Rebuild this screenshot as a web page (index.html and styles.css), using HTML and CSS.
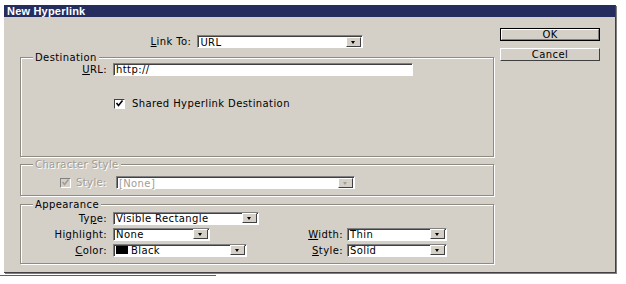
FILE: index.html
```html
<!DOCTYPE html>
<html lang="en">
<head>
    <meta charset="UTF-8">
    <title>New Hyperlink</title>
    <link rel="stylesheet" href="styles.css">
</head>
<body>

<div class="dialog">
    <div class="titlebar">New Hyperlink</div>

    <div class="content">
        <div class="main">
            <div class="link-row">
                <span class="label-inline"><u>L</u>ink To:</span>
                <div class="select w-link"><span class="value">URL</span><span class="drop"></span></div>
            </div>

            <!-- Destination -->
            <div class="group dest">
                <div class="legend">Destination</div>
                <div class="row url-row">
                    <span class="lbl"><u>U</u>RL:</span>
                    <div class="textbox">http://</div>
                </div>
                <div class="row check-row">
                    <span class="check"><svg viewBox="0 0 9 9" width="9" height="9"><polyline points="1.5,4 3.5,6.5 7.5,1.5" fill="none" stroke="#000" stroke-width="1.6"/></svg></span>
                    <span>Shared Hyperlink Destination</span>
                </div>
            </div>

            <!-- Character Style -->
            <div class="group charstyle disabled">
                <div class="legend">Character Style</div>
                <div class="row style-row">
                    <span class="check"><svg viewBox="0 0 9 9" width="9" height="9"><polyline points="1.5,4 3.5,6.5 7.5,1.5" fill="none" stroke="#a19d95" stroke-width="1.6"/></svg></span>
                    <span class="style-lbl">Style:</span>
                    <div class="select w-none"><span class="value">[None]</span><span class="drop"></span></div>
                </div>
            </div>

            <!-- Appearance -->
            <div class="group appearance">
                <div class="legend">Appearance</div>
                <div class="app-grid">
                    <span class="lbl">Ty<u>p</u>e:</span>
                    <div class="cell"><div class="select w-type"><span class="value">Visible Rectangle</span><span class="drop"></span></div></div>
                    <span></span>
                    <span></span>

                    <span class="lbl">Hi<u>g</u>hlight:</span>
                    <div class="cell"><div class="select w-high"><span class="value">None</span><span class="drop"></span></div></div>
                    <span class="lbl lbl-right"><u>W</u>idth:</span>
                    <div class="cell"><div class="select w-side"><span class="value">Thin</span><span class="drop"></span></div></div>

                    <span class="lbl"><u>C</u>olor:</span>
                    <div class="cell"><div class="select w-color"><span class="swatch"></span><span class="value">Black</span><span class="drop"></span></div></div>
                    <span class="lbl lbl-right"><u>S</u>tyle:</span>
                    <div class="cell"><div class="select w-side"><span class="value">Solid</span><span class="drop"></span></div></div>
                </div>
            </div>
        </div>

        <div class="side">
            <div class="btn default"><span>OK</span></div>
            <div class="btn">Cancel</div>
        </div>
    </div>
</div>

<div class="under"></div>

</body>
</html>
```

FILE: styles.css
```css
/* Estilo general */
body {
    margin: 0;
    background-color: #ffffff;
    font-family: 'DejaVu Sans', Verdana, sans-serif;
    font-size: 10px;
    letter-spacing: 0.4px;
    color: #000;
}
u {
    text-decoration: underline;
    text-underline-offset: 1px;
}

/* Ventana */
.dialog {
    margin: 5px 0 0 4px;
    width: 611px;
    height: 267px;
    background-color: #d4d0c8;
    border-right: 1px solid #404040;
    border-bottom: 1px solid #404040;
    box-shadow: 1px 1px 0 #808080;
}
.titlebar {
    height: 12px;
    line-height: 12px;
    padding-left: 3px;
    background-color: #252d5f;
    color: #fff;
    font-family: 'Liberation Sans', Arial, sans-serif;
    font-weight: bold;
    font-size: 11px;
    letter-spacing: 0.2px;
}
.content {
    display: flex;
    padding-left: 16px;
}
.main {
    width: 474px;
    padding-top: 18px;
}
.side {
    display: flex;
    flex-direction: column;
    gap: 7px;
    margin-left: 6px;
    padding-top: 11px;
    width: 100px;
}

/* Fila Link To */
.link-row {
    display: flex;
    justify-content: center;
    align-items: center;
    height: 13px;
}
.label-inline {
    margin-right: 6px;
}

/* Grupos */
.group {
    box-sizing: border-box;
    border: 1px solid #8e8b85;
    box-shadow: inset 1px 1px 0 #fff, 1px 1px 0 #fff;
}
.legend {
    position: relative;
    top: -7px;
    width: fit-content;
    height: 13px;
    line-height: 13px;
    margin: 0 0 -13px 12px;
    padding: 0 2px;
    background-color: #d4d0c8;
}
.dest {
    margin-top: 9px;
    height: 100px;
}
.dest .url-row {
    margin-top: 5px;
}
.charstyle {
    margin-top: 7px;
    height: 32px;
    padding-top: 11px;
}
.charstyle .legend {
    top: -18px;
}
.appearance {
    margin-top: 8px;
    height: 60px;
    padding-top: 6px;
}
.appearance .legend {
    top: -13px;
}
.disabled {
    color: #a19d95;
    text-shadow: 1px 1px 0 #fff;
}

/* Filas */
.row {
    display: flex;
    align-items: center;
    height: 13px;
}
.lbl {
    width: 86px;
    margin-right: 6px;
    text-align: right;
    white-space: nowrap;
}
.check-row {
    margin-top: 21px;
    padding-left: 93px;
}
.check-row .check {
    margin-right: 7px;
}
.style-row {
    padding-left: 39px;
}
.style-lbl {
    margin-left: 5px;
    margin-right: 9px;
}

/* Controles */
.textbox,
.select {
    box-sizing: border-box;
    display: flex;
    align-items: center;
    height: 13px;
    padding-left: 2px;
    background-color: #fff;
    border-top: 1px solid #808080;
    border-left: 1px solid #808080;
    border-right: 1px solid #fff;
    border-bottom: 1px solid #fff;
    box-shadow: inset 1px 1px 0 #404040;
    line-height: 11px;
    white-space: nowrap;
}
.textbox {
    width: 300px;
}
.select .value {
    flex: 1;
    padding-top: 1px;
}
.drop {
    box-sizing: border-box;
    position: relative;
    width: 15px;
    height: 10px;
    margin-right: 1px;
    background-color: #d4d0c8;
    border-top: 1px solid #fff;
    border-left: 1px solid #fff;
    border-right: 1px solid #404040;
    border-bottom: 1px solid #404040;
}
.drop::after {
    content: "";
    position: absolute;
    left: 4px;
    top: 3px;
    border-left: 2.5px solid transparent;
    border-right: 2.5px solid transparent;
    border-top: 3px solid #000;
}
.w-link { width: 166px; }
.w-none { width: 239px; }
.w-type { width: 146px; }
.w-high { width: 97px; }
.w-color { width: 134px; }
.w-side { width: 100px; }

.disabled .select {
    color: #a19d95;
}
.disabled .drop::after {
    border-top-color: #a19d95;
}

.swatch {
    width: 12px;
    height: 8px;
    margin-right: 3px;
    background-color: #000;
}

.check {
    box-sizing: border-box;
    display: inline-flex;
    align-items: center;
    justify-content: center;
    width: 11px;
    height: 10px;
    background-color: #fff;
    border-top: 1px solid #404040;
    border-left: 1px solid #404040;
    border-right: 1px solid #fff;
    border-bottom: 1px solid #fff;
}
.disabled .check {
    background-color: #d4d0c8;
    border-color: #808080 #fff #fff #808080;
}

/* Rejilla Appearance */
.app-grid {
    display: grid;
    grid-template-columns: 92px 184px 50px 100px;
    grid-auto-rows: 14px;
    row-gap: 2px;
    align-items: center;
}
.app-grid .lbl {
    width: auto;
}
.lbl-right {
    margin-right: 4px;
}

/* Botones */
.btn {
    box-sizing: border-box;
    height: 13px;
    line-height: 11px;
    text-align: center;
    border-top: 1px solid #fff;
    border-left: 1px solid #fff;
    border-right: 1px solid #404040;
    border-bottom: 1px solid #404040;
}
.btn.default {
    border: 1px solid #000;
    line-height: 9px;
}
.btn.default span {
    display: block;
    height: 11px;
    border-top: 1px solid #fff;
    border-left: 1px solid #fff;
    border-right: 1px solid #808080;
    border-bottom: 1px solid #808080;
    box-sizing: border-box;
}

/* Debajo de la ventana */
.under {
    margin: 2px 0 0 0;
    width: 216px;
    height: 1px;
    background-color: #606060;
}
```
